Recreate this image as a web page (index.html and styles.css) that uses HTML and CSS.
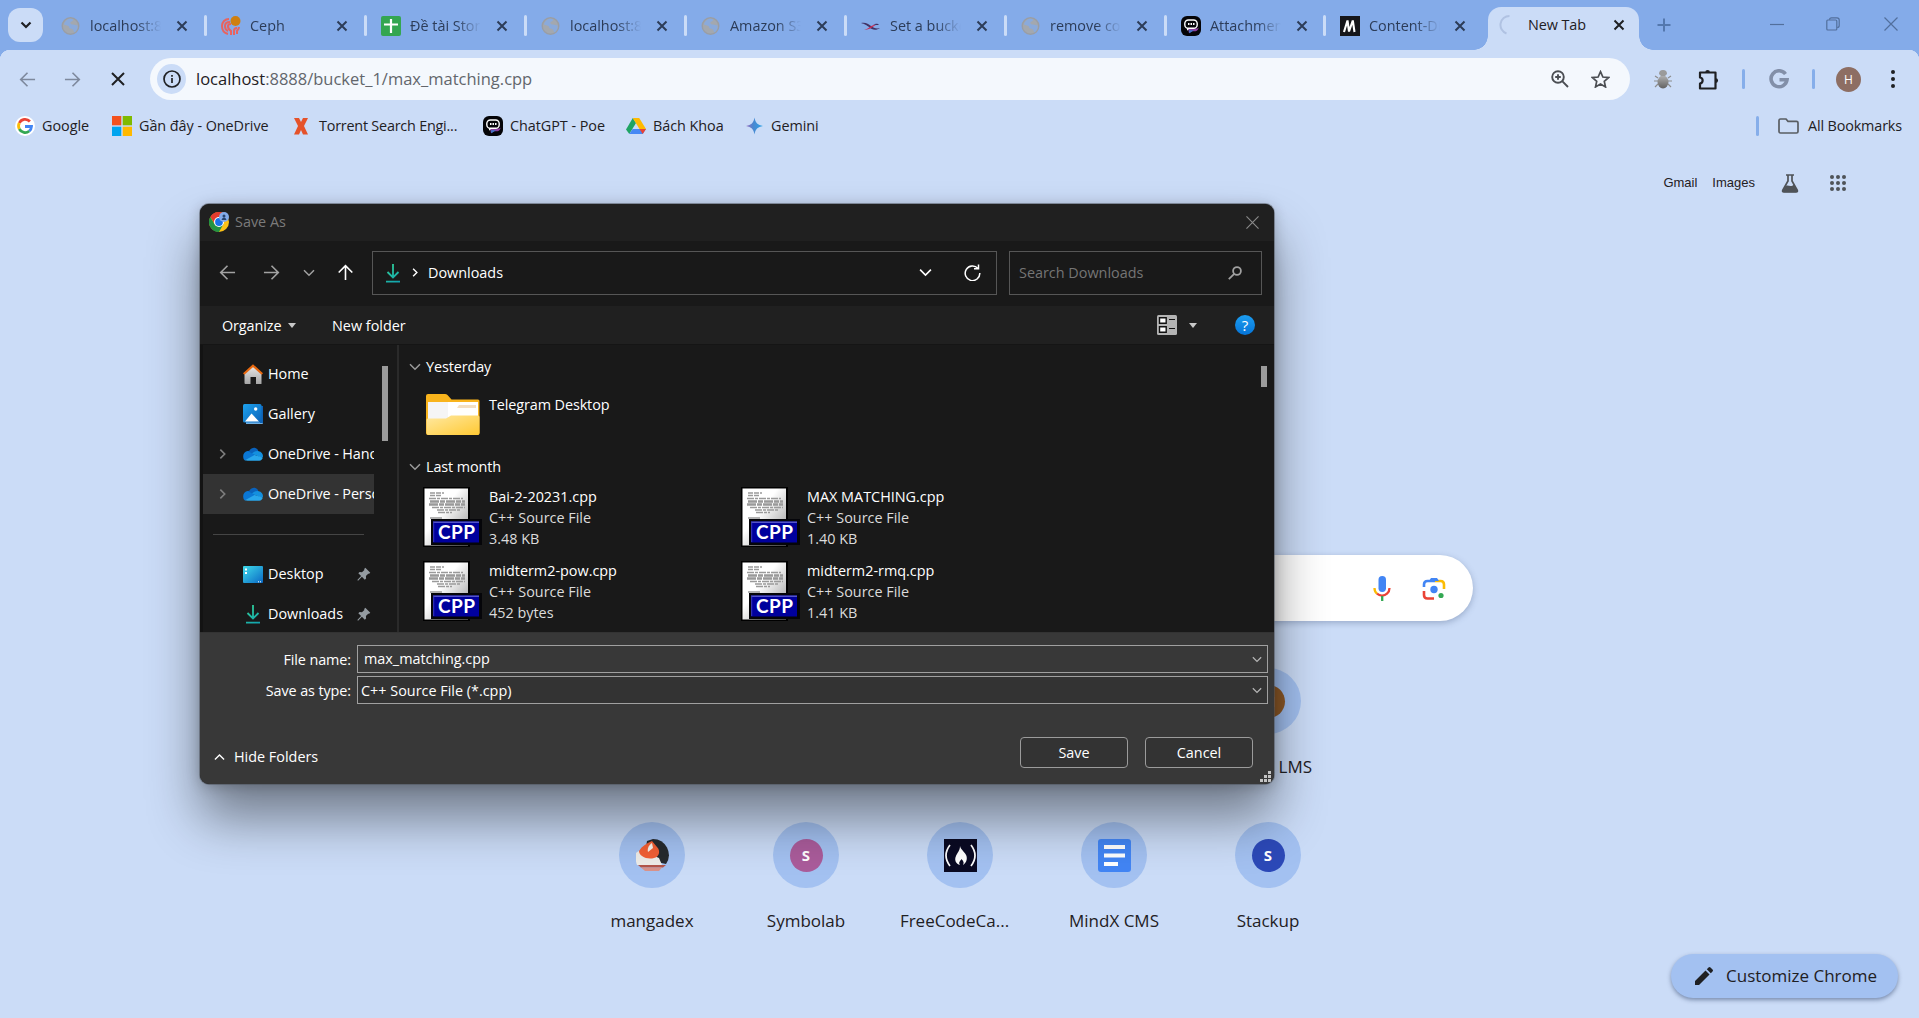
FILE: index.html
```
<!DOCTYPE html>
<html lang="en">
<head>
<meta charset="utf-8">
<title>New Tab</title>
<link rel="stylesheet" href="styles.css">
</head>
<body>
<svg class="defs" aria-hidden="true">
  <defs>
    <linearGradient id="tealflat" gradientUnits="userSpaceOnUse" x1="3" y1="0" x2="17" y2="20"><stop offset="0" stop-color="#35d695"/><stop offset="1" stop-color="#0f9fb0"/></linearGradient>
    <linearGradient id="paper" x1="0" y1="0" x2="1" y2="1"><stop offset=".4" stop-color="#fff"/><stop offset="1" stop-color="#8e8e8e"/></linearGradient>
    <linearGradient id="gold" x1="0" y1="0" x2="1" y2="1"><stop offset="0" stop-color="#ffe9a2"/><stop offset="1" stop-color="#ffc933"/></linearGradient>
    <linearGradient id="gem" x1="0" y1="0" x2="1" y2="0"><stop offset="0" stop-color="#9b6fc0"/><stop offset=".4" stop-color="#4c86cf"/><stop offset="1" stop-color="#2aa4e8"/></linearGradient>
    <linearGradient id="sea" x1="0" y1="0" x2="1" y2="1"><stop offset="0" stop-color="#3fdbea"/><stop offset="1" stop-color="#0a68c4"/></linearGradient>
    <linearGradient id="sky" x1="0" y1="0" x2="1" y2="1"><stop offset="0" stop-color="#1da2ee"/><stop offset="1" stop-color="#0a62b8"/></linearGradient>
    <linearGradient id="wall" x1="0" y1="0" x2="0" y2="1"><stop offset="0" stop-color="#e8e8e8"/><stop offset="1" stop-color="#a5a5a5"/></linearGradient>
    <linearGradient id="bugbody" x1="0" y1="0" x2="0" y2="1"><stop offset="0" stop-color="#b0b0b0"/><stop offset="1" stop-color="#626262"/></linearGradient>
  </defs>
  <symbol id="x" viewBox="0 0 12 12"><path d="M1.500 1.500l9 9M10.500 1.500l-9 9" fill="none" stroke="currentColor" stroke-width="2"/></symbol>
  <symbol id="thinx" viewBox="0 0 14 14"><path d="M.5.5l13 13M13.500.5l-13 13" fill="none" stroke="currentColor" stroke-width="1.200"/></symbol>
  <symbol id="globe" viewBox="0 0 20 20"><circle cx="9.500" cy="10" r="8.300" fill="#a3a8af" stroke="#9a9ea5" stroke-width="1.400"/><path d="M6 4c2-1.500 5-1.500 6-.5 0 1.500-1 2-2.500 2.500-.5 1.500.5 3 2.500 2.500 2 0 2.500 1 4.500 1 .5 3.500-1 5.500-3 7-1-1-1-3-2.500-3.500-2-.5-3-1-3-2.500C6.500 9 4.500 9.500 3 8.500 3.300 6.500 4.500 5 6 4z" fill="#8aaadb"/></symbol>
  <symbol id="poe" viewBox="0 0 20 20"><rect width="20" height="20" rx="6" fill="#050508"/><path d="M7 12.500h9c1.500 0 1.700-1 1.700-2.500-.2 3-.5 4.500-3.200 5.200H11l-3 2z" fill="#8b3fa0"/><path d="M8 14.200h5l-4.600 3z" fill="#3e77c9"/><rect x="3.800" y="4" width="12.400" height="8.300" rx="3.600" fill="none" stroke="#fff" stroke-width="1.400"/><path d="M7 8.100h1.500m1 0H11m1 0h1.500" stroke="#fff" stroke-width="2"/><path d="M6 12v2.800l3-2.500z" fill="#fff"/></symbol>
  <symbol id="down" viewBox="0 0 20 20"><path d="M10 1v13M4.500 9l5.500 5.500L15.500 9M3 18.700h14" fill="none" stroke="url(#tealflat)" stroke-width="1.800"/></symbol>
  <symbol id="cloud" viewBox="0 0 20 14"><path d="M2 7.500C3 4.500 5 4 6.500 3.500 9-.5 14.500.2 15.500 4.500L12 9z" fill="#0a62bb"/><path d="M.3 10.500C-.3 7 1.500 4.300 5 4l9 5.500-12 4C1 13 .4 11.800.3 10.500z" fill="#0b77d4"/><path d="M9 6.500c2-2.300 5-2.800 6.700-2.200 3 .5 4.500 3 4.300 5.500l-2 1z" fill="#1490df"/><path d="M2 13.300L11.500 8l8.300 2.500c-.4 1.900-1.700 3-3.500 3.200H4.600c-1 0-1.900 0-2.600-.4z" fill="#29a7ec"/></symbol>
  <symbol id="pin" viewBox="0 0 16 16"><path d="M9.500.8l5.700 5.700-1.400 1.300-1-.2-2.600 2.700.2 2.700-1.500 1.500-3.300-3.300L1.200 15.600l-.8-.8 4.300-4.400L1.500 7.200 3 5.700l2.700.2 2.700-2.600-.2-1.100z" fill="#949ba1"/></symbol>
  <symbol id="vee" viewBox="0 0 12 8"><path d="M1 1.300l5 5 5-5" fill="none" stroke="currentColor" stroke-width="1.500"/></symbol>
  <symbol id="angle" viewBox="0 0 8 12"><path d="M1.500 1l5 5-5 5" fill="none" stroke="currentColor" stroke-width="1.900"/></symbol>
  <symbol id="arrow" viewBox="0 0 18 18"><path d="M17 9H2M9 1.800L1.800 9 9 16.200" fill="none" stroke="currentColor" stroke-width="1.700"/></symbol>
  <symbol id="tri" viewBox="0 0 8 5"><path d="M0 0h8L4 5z" fill="currentColor"/></symbol>
  <symbol id="cpp" viewBox="0 0 59 60"><path d="M0 0h47v60H0z" fill="#000"/><path d="M1.500 1.500H45v57H1.500z" fill="url(#paper)"/><g stroke="#9a9a9a" stroke-width="1.500"><path d="M7 6h14M7 8.500h12" stroke-dasharray="5 1"/><path d="M6 11.500h34M9 20.500h33M14 23h23M15 25.500h14" stroke-dasharray="7 1 3 1"/><path d="M7 31h12"/></g><g stroke="#999" stroke-width="2.400"><path d="M7 14.500h35M6 17.500h36" stroke-dasharray="9 1 5 1"/></g><path d="M8 32h51v26H8z" fill="#050509"/><path d="M10 34.500h46v21H10z" fill="#00009d"/><path d="M10 35.200h46" stroke="#5454c9" stroke-width="1.500"/><path d="M10.700 35v20" stroke="#3939b5"/></symbol>
</svg>

<header class="tabstrip">
  <button class="tab-search"><svg width="12" height="8" viewBox="0 0 12 8"><path d="M1.500 1.500L6 6l4.500-4.500" fill="none" stroke="#1f2023" stroke-width="2.200"/></svg></button>
  <div class="tab"><svg class="fav"><use href="#globe"/></svg><span>localhost:8888</span><svg class="cls"><use href="#x"/></svg></div>
  <div class="tab"><svg class="fav" viewBox="0 0 20 20"><g fill="none" stroke="#e8635f" stroke-width="2"><path d="M7 18c-4-1-6-4-6-8s3-7 7-7"/><path d="M7 15c-3-1-3-3-3-5 0-3 2-4 5-4M10 19v-4c-2-1-3-3-3-5 0-1 1-2 3-2M13 19v-4c0-2 1-3 3-3M16 18v-3c1-1 2-2 2-4"/></g><circle cx="14.500" cy="5" r="5" fill="#cf7f10"/></svg><span>Ceph</span><svg class="cls"><use href="#x"/></svg></div>
  <div class="tab"><svg class="fav" viewBox="0 0 20 20"><rect width="20" height="20" rx="2" fill="#34a651"/><path d="M10 3v14M3 8.500h14" stroke="#fff" stroke-width="2.200"/></svg><span>Đề tài Storage</span><svg class="cls"><use href="#x"/></svg></div>
  <div class="tab"><svg class="fav"><use href="#globe"/></svg><span>localhost:8888</span><svg class="cls"><use href="#x"/></svg></div>
  <div class="tab"><svg class="fav"><use href="#globe"/></svg><span>Amazon S3 AP</span><svg class="cls"><use href="#x"/></svg></div>
  <div class="tab"><svg class="fav" viewBox="0 0 20 20"><path d="M0 7c5-1 7 1 10 3 3 2 5 3 9 2-4 3-8 2-11-1C5 9 4 8 0 7z" fill="#413366"/><path d="M3 14c5-1 6-5 14-6-5 2-8 6-14 6z" fill="#c72d55"/><path d="M12 8c2 0 5-1 6 1-2 0-4 0-6-1z" fill="#413366"/></svg><span>Set a bucket pol</span><svg class="cls"><use href="#x"/></svg></div>
  <div class="tab"><svg class="fav"><use href="#globe"/></svg><span>remove content</span><svg class="cls"><use href="#x"/></svg></div>
  <div class="tab short"><svg class="fav"><use href="#poe"/></svg><span>Attachments</span><svg class="cls"><use href="#x"/></svg></div>
  <div class="tab last"><svg class="fav" viewBox="0 0 20 20"><rect width="20" height="20" fill="#15161a"/><path d="M4 16L7.500 4.500 9 15.500 12.800 4.500 14.500 16" fill="none" stroke="#fff" stroke-width="2.100" stroke-linejoin="bevel"/></svg><span>Content-Disposition</span><svg class="cls"><use href="#x"/></svg></div>
  <div class="tab active"><svg class="fav" viewBox="0 0 20 20"><path d="M12.500 1A9 9 0 0 0 9.500 18.500" fill="none" stroke="#b0c2e2" stroke-width="2"/></svg><span>New Tab</span><svg class="cls"><use href="#x"/></svg></div>
  <svg class="plus" viewBox="0 0 14 14"><path d="M7 .5v13M.5 7h13" stroke="#5478ae" stroke-width="2"/></svg>
  <div class="winctl">
    <svg width="14" height="14" viewBox="0 0 14 14"><path d="M0 7.500h14" stroke="#526f9c" stroke-width="1.200"/></svg>
    <svg width="14" height="14" viewBox="0 0 14 14" fill="none" stroke="#526f9c" stroke-width="1.200"><rect x=".8" y="3" width="10" height="10" rx="1"/><path d="M3.500 2.800Q3.500.8 5.500.8h5.500Q13.200.8 13.200 3v5.500q0 2-2 2"/></svg>
    <svg width="14" height="14"><use href="#thinx"/></svg>
  </div>
</header>

<div class="toolbar">
  <svg class="nav dim" width="17" height="17"><use href="#arrow"/></svg>
  <svg class="nav dim flip" width="17" height="17"><use href="#arrow"/></svg>
  <svg class="nav" width="14" height="14" viewBox="0 0 14 14"><path d="M1 1l12 12M13 1L1 13" stroke="#1f2023" stroke-width="2"/></svg>
  <div class="omnibox">
    <span class="info"><svg width="18" height="18" viewBox="0 0 18 18" fill="none" stroke="#202124" stroke-width="1.700"><circle cx="9" cy="9" r="8"/><path d="M9 8v5M9 5v1.700"/></svg></span>
    <span class="url"><b>localhost</b>:8888/bucket_1/max_matching.cpp</span>
    <svg width="18" height="18" viewBox="0 0 18 18" fill="none" stroke="#4b4e53" stroke-width="1.900"><circle cx="7" cy="7" r="5.800"/><path d="M11.200 11.200L17 17M7 4.200v5.600M4.200 7h5.600"/></svg>
    <svg width="19" height="18" viewBox="0 0 20 19" fill="none" stroke="#4b4e53" stroke-width="1.800"><path d="M10 1.800l2.500 5.600 6 .6-4.500 4 1.300 5.900L10 14.800l-5.300 3.100L6 12 1.500 8l6-.6z"/></svg>
  </div>
  <div class="ext">
    <svg width="18" height="20" viewBox="0 0 18 20"><g stroke="#8d8d8d" stroke-width="1.200" fill="none"><path d="M4 9L1 7M4 12H0M4 15l-3 3M14 9l3-2M14 12h4M14 15l3 3"/></g><ellipse cx="9" cy="13" rx="5.500" ry="6.500" fill="url(#bugbody)"/><path d="M5 5a4 4 0 0 1 8 0l-2 2H7z" fill="#9a9a9a"/></svg>
    <svg width="21" height="21" viewBox="0 0 21 21"><path d="M2 3.500h15.500V19.500H2v-5c3.500-.5 3.500-5.500 0-6z" fill="none" stroke="#1f2023" stroke-width="2.200" stroke-linejoin="round"/><path d="M7.300 3.300a2.300 2.300 0 0 1 4.600 0zM17.700 9.200a2.300 2.300 0 0 1 0 4.800z" fill="#1f2023"/></svg>
    <i class="bar"></i>
    <svg width="20" height="20" viewBox="0 0 20 20"><path d="M16.500 5A8 8 0 1 0 18 10.800H10.500" fill="none" stroke="#828fa8" stroke-width="3.600"/></svg>
    <i class="bar"></i>
    <span class="avatar">H</span>
    <svg width="4" height="18" viewBox="0 0 4 18" fill="#1f2023"><circle cx="2" cy="2" r="2"/><circle cx="2" cy="9" r="2"/><circle cx="2" cy="16" r="2"/></svg>
  </div>
</div>

<nav class="bookmarks">
  <a><svg viewBox="0 0 20 20"><circle cx="10" cy="10" r="10" fill="#fff"/><g fill="none" stroke-width="2.800"><path d="M14.900 5.500A6.500 6.500 0 0 0 4.300 7" stroke="#ea4335"/><path d="M4.300 7a6.500 6.500 0 0 0 0 6" stroke="#fbbc05"/><path d="M4.300 13a6.500 6.500 0 0 0 10 2" stroke="#34a853"/><path d="M14.300 15a6.500 6.500 0 0 0 2.200-4.500H10" stroke="#4285f4"/></g></svg>Google</a>
  <a><svg viewBox="0 0 20 20"><path fill="#f4511e" d="M0 0h9.300v9.300H0z"/><path fill="#7fba00" d="M10.700 0H20v9.300h-9.300z"/><path fill="#00a4ef" d="M0 10.700h9.300V20H0z"/><path fill="#ffb900" d="M10.700 10.700H20V20h-9.300z"/></svg>Gần đây - OneDrive</a>
  <a class="tight"><svg class="slim" viewBox="0 0 14 18"><path d="M0 1h5l2 4 2-4h5l-4 8 4 8.500H9L7 13l-2 4.500H0L4 9z" fill="#e5522a"/></svg>Torrent Search Engi...</a>
  <a><svg><use href="#poe"/></svg>ChatGPT - Poe</a>
  <a><svg viewBox="0 0 20 20"><path d="M6.800 2L0 13.500 3.300 18l6.700-11z" fill="#1fa463"/><path d="M6.800 2h6.400L20 13h-6.500z" fill="#ffba00"/><path d="M3.300 18L6.600 13H20l-3.300 5z" fill="#4688f4"/><path d="M13.500 13H20l-3.300 5z" fill="#ea4335"/></svg>Bách Khoa</a>
  <a><svg class="star" viewBox="0 0 16 16"><path d="M8 0c.8 5 3 7.200 8 8-5 .8-7.200 3-8 8-.8-5-3-7.200-8-8 5-.8 7.200-3 8-8z" fill="url(#gem)"/></svg>Gemini</a>
  <span class="all"><i class="bar"></i><svg width="21" height="16" viewBox="0 0 21 16"><path d="M1 2.500Q1 1 2.500 1H8l2 2.300h8.500Q20 3.300 20 4.800v8.700q0 1.500-1.500 1.500h-16Q1 15 1 13.500z" fill="none" stroke="#5a5e63" stroke-width="1.700"/></svg>All Bookmarks</span>
</nav>

<main class="ntp">
  <div class="links">
    <span>Gmail</span><span>Images</span>
    <svg width="18" height="19" viewBox="0 0 18 19"><path d="M5 1h8M7 1v6L1.800 16.200Q1 18 3 18h12q2 0 1.200-1.800L11 7V1" fill="none" stroke="#4f5358" stroke-width="1.700"/><path d="M4.500 12c3-1.500 5 2 8.500-1.500L16.500 17l-1 1.200H2.500L1.500 17z" fill="#4f5358"/></svg>
    <svg width="16" height="16" viewBox="0 0 16 16" fill="#4f5358"><circle cx="2" cy="2" r="2"/><circle cx="8" cy="2" r="2"/><circle cx="14" cy="2" r="2"/><circle cx="2" cy="8" r="2"/><circle cx="8" cy="8" r="2"/><circle cx="14" cy="8" r="2"/><circle cx="2" cy="14" r="2"/><circle cx="8" cy="14" r="2"/><circle cx="14" cy="14" r="2"/></svg>
  </div>
  <div class="realbox">
    <svg width="18" height="25" viewBox="0 0 18 25"><rect x="5.500" y="0" width="7.500" height="16" rx="3.700" fill="#4285f4"/><g fill="none" stroke-width="2.300"><path d="M1.500 12c0 2.500 1 4.500 2.500 5.700" stroke="#fbbc04"/><path d="M4 17.700c3 2.600 7.500 2.300 10 0 1.500-1.300 2.500-3.300 2.500-5.700" stroke="#ea4335"/><path d="M9.200 20v5" stroke="#34a853"/></g></svg>
    <svg width="24" height="23" viewBox="0 0 24 23"><g fill="none" stroke-width="2.600"><path d="M2 10V7.500Q2 4 5.500 4H13" stroke="#4285f4"/><path d="M13 4h5.500Q22 4 22 7.500V12" stroke="#fbbc04"/><path d="M2 14v4q0 3.500 3.500 3.500H12" stroke="#ea4335"/></g><path d="M7 4l2-3h6l2 3z" fill="#4285f4"/><circle cx="12" cy="12.500" r="3.700" fill="#4285f4"/><circle cx="19" cy="18.500" r="2.600" fill="#34a853"/></svg>
  </div>
  <div class="tiles">
    <div class="tile fifth"><span class="disc"><i class="letter brown">M</i></span>MindX LMS</div>
    <div class="tile"><span class="disc"><svg viewBox="0 0 33 33"><path d="M17 0a16 16 0 0 1 13 25l-9-2L10 8 11 2z" fill="#262a2e"/><path d="M0 14c4-3 7-3 9-1l14 6 3 7H1C-.5 22-.5 18 0 14z" fill="#eeece8"/><path d="M3 12c3-5 8-8 13-10l5 6c4 4 2 10-3 11-7 2-15-2-15-7z" fill="#f25f34"/><path d="M16 4l1 5-5 4c-1-4 1-7 4-9z" fill="#f7f2ec"/><path d="M2 26h28l-3 2.500H5z" fill="#b4564a"/><path d="M5 28.500h21L23 32H9z" fill="#d9938b"/></svg></span>mangadex</div>
    <div class="tile"><span class="disc"><i class="letter pink">S</i></span>Symbolab</div>
    <div class="tile"><span class="disc"><svg viewBox="0 0 33 33"><path d="M0 0h33v33H0z" fill="#0a0a23"/><g fill="none" stroke="#fff" stroke-width="1.700"><path d="M6 6q-8 10.500 0 21M27 6q8 10.500 0 21"/></g><path d="M16 7c1 4 5 6 6.500 10 1 4-.5 7-3.500 9 1.500-3 0-4-1.500-6-1 2-3.500 3-1.500 6-4-1-6-5-4-9 1-3 4-5 4-10z" fill="#fff"/></svg></span><em>FreeCodeCa...</em></div>
    <div class="tile"><span class="disc"><svg viewBox="0 0 33 33"><rect width="33" height="33" rx="3" fill="#4285f4"/><path d="M6 6h21v4H6zM6 14.500h21v4H6zM6 23h14v4H6z" fill="#fff"/></svg></span>MindX CMS</div>
    <div class="tile"><span class="disc"><i class="letter blue">S</i></span>Stackup</div>
  </div>
  <button class="customize"><svg width="18" height="18" viewBox="0 0 18 18"><path d="M0 14L10.500 3.500l4 4L4 18H0zM11.800 2.300L13.500.6q1-1 2 0l2 2q1 1 0 2l-1.700 1.700z" fill="#1f2023"/></svg>Customize Chrome</button>
</main>

<section class="dialog">
  <div class="titlebar">
    <svg width="20" height="20" viewBox="0 0 20 20"><circle cx="10" cy="10" r="10" fill="#fbc116"/><path d="M1.300 5A10 10 0 0 1 18.700 5H10L6 12z" fill="#e33b2e"/><path d="M1.300 5A10 10 0 0 0 10 20l4.500-8H5.500z" fill="#229342"/><circle cx="10" cy="10" r="5" fill="#fff"/><circle cx="10" cy="10" r="3.900" fill="#1a73e8"/><circle cx="15" cy="5" r="5" fill="#84abe9"/><circle cx="15" cy="4" r="1.500" fill="#28446f"/><path d="M12.500 8q.5-2.500 2.500-2.500T17.500 8z" fill="#28446f"/></svg>
    <span>Save As</span>
    <svg class="close" width="13" height="13"><use href="#thinx"/></svg>
  </div>
  <div class="navrow">
    <svg class="g" width="17" height="17"><use href="#arrow"/></svg>
    <svg class="g flip" width="17" height="17"><use href="#arrow"/></svg>
    <svg class="g" width="12" height="8"><use href="#vee"/></svg>
    <svg class="up" width="17" height="17"><use href="#arrow"/></svg>
    <div class="address"><svg width="20" height="20"><use href="#down"/></svg><svg width="6" height="9"><use href="#angle"/></svg><span>Downloads</span><svg width="13" height="9"><use href="#vee"/></svg><svg width="17" height="17" viewBox="0 0 17 17" fill="none" stroke="#fff" stroke-width="1.500"><path d="M14 4.500A7.300 7.300 0 1 0 15.800 9M14.500.5v4.300H10"/></svg></div>
    <div class="search"><span>Search Downloads</span><svg width="14" height="14" viewBox="0 0 14 14" fill="none" stroke="#a0a0a0" stroke-width="1.800"><circle cx="9" cy="5" r="3.900"/><path d="M6.200 7.800L.8 13.200"/></svg></div>
  </div>
  <div class="cmdbar">
    <span class="org">Organize<svg width="8" height="5"><use href="#tri"/></svg></span><span>New folder</span>
    <svg class="view" width="20" height="20" viewBox="0 0 20 20"><rect width="20" height="20" rx="1.500" fill="#b4b4b4"/><path d="M2.500 2.700h6.700v5.600H2.500zM2.500 11.700h6.700v5.600H2.500z" fill="#fff" stroke="#111" stroke-width="1.400"/><path d="M12 4.500h6M12 13.500h6" stroke="#111" stroke-width="1.200"/></svg>
    <svg class="t2" width="8" height="5"><use href="#tri"/></svg>
    <span class="help">?</span>
  </div>
  <div class="body">
    <aside>
      <ul>
        <li><svg width="20" height="20" viewBox="0 0 20 20"><path d="M1.500 9L10 2l8.500 7v10.500q0 .5-.5.5h-5v-7H7.500v7h-5q-1 0-1-1z" fill="url(#wall)"/><path d="M.7 10L10 1.700 19.300 10" fill="none" stroke="#e8680f" stroke-width="2.200"/></svg>Home</li>
        <li><svg width="20" height="20" viewBox="0 0 20 20"><path d="M3 2h17v17q0 1-1 1H3z" fill="#6fb0e4"/><path d="M17 2h3v17h-3z" fill="#0f62b4"/><rect width="18.500" height="18.500" rx="1.500" fill="url(#sky)"/><path d="M2 17.500l6.500-8 7.500 8z" fill="#fff"/><circle cx="12.700" cy="5" r="1.700" fill="#fff"/></svg>Gallery</li>
        <li class="sub"><svg class="exp" width="7" height="12"><use href="#angle"/></svg><svg width="20" height="14"><use href="#cloud"/></svg>OneDrive - Hanoi</li>
        <li class="sub sel"><svg class="exp" width="7" height="12"><use href="#angle"/></svg><svg width="20" height="14"><use href="#cloud"/></svg>OneDrive - Personal</li>
        <li class="rule"></li>
        <li><svg width="20" height="17" viewBox="0 0 20 17"><rect width="20" height="17" rx="1" fill="url(#sea)"/><path d="M2 2.500h2v2H2zM2 6h2v2H2z" fill="#fff"/><path d="M15 15.800h1m1 0h1" stroke="#fff"/></svg>Desktop<svg class="pin"><use href="#pin"/></svg></li>
        <li><svg width="20" height="20"><use href="#down"/></svg>Downloads<svg class="pin"><use href="#pin"/></svg></li>
      </ul>
      <i class="thumb"></i>
    </aside>
    <div class="files">
      <h4><svg width="12" height="8"><use href="#vee"/></svg>Yesterday</h4>
      <div class="folder"><svg width="54" height="43" viewBox="0 0 54 43"><path d="M0 3Q0 1 2 1h17q1.500 0 2.500 1l4 4.500H52q1.500 0 1.500 1.500v32q0 2-2 2H2q-2 0-2-2z" fill="#f9b41c"/><path d="M2 9h50v22H2z" fill="#f5f5f5"/><path d="M22 9h30v20H22z" fill="#fff"/><path d="M33 12h17v3H31z" fill="#eed1aa" opacity=".7"/><path d="M.5 27q0-1.500 1.500-1.500h18l5-3h27q1.500 0 1.500 1.500v16q0 2-2 2H2.500q-2 0-2-2z" fill="url(#gold)"/></svg><span>Telegram Desktop</span></div>
      <h4><svg width="12" height="8"><use href="#vee"/></svg>Last month</h4>
      <div class="grid">
        <div class="file"><span class="ico"><svg><use href="#cpp"/></svg><b>CPP</b></span><p>Bai-2-20231.cpp<small>C++ Source File</small><small>3.48 KB</small></p></div>
        <div class="file"><span class="ico"><svg><use href="#cpp"/></svg><b>CPP</b></span><p>MAX MATCHING.cpp<small>C++ Source File</small><small>1.40 KB</small></p></div>
        <div class="file"><span class="ico"><svg><use href="#cpp"/></svg><b>CPP</b></span><p>midterm2-pow.cpp<small>C++ Source File</small><small>452 bytes</small></p></div>
        <div class="file"><span class="ico"><svg><use href="#cpp"/></svg><b>CPP</b></span><p>midterm2-rmq.cpp<small>C++ Source File</small><small>1.41 KB</small></p></div>
      </div>
    </div>
    <i class="thumb short-thumb"></i>
  </div>
  <footer>
    <label>File name:</label><div class="field name">max_matching.cpp<svg width="10" height="7"><use href="#vee"/></svg></div>
    <label>Save as type:</label><div class="field">C++ Source File (*.cpp)<svg width="10" height="7"><use href="#vee"/></svg></div>
    <div class="actions"><span class="hide"><svg width="11" height="8"><use href="#vee"/></svg>Hide Folders</span><button>Save</button><button>Cancel</button></div>
    <svg class="grip" width="11" height="11" viewBox="0 0 11 11" fill="#c4c4c4"><path d="M8 0h3v3H8zM4 4h3v3H4zM8 4h3v3H8zM0 8h3v3H0zM4 8h3v3H4zM8 8h3v3H8z"/></svg>
  </footer>
</section>
</body>
</html>
```
FILE: styles.css
```
* { box-sizing: border-box; }
body {
  margin: 0; height: 1018px; overflow: hidden; position: relative;
  display: flex; flex-direction: column;
  background: #cbdcf7; color: #1f2023;
  font: 14.4px/20px "Open Sans", "Noto Sans", sans-serif;
}
svg { display: block; flex: none; }
button { font: inherit; color: inherit; border: 0; padding: 0; }
em { font-style: normal; }
.defs { position: absolute; width: 0; height: 0; }
.flip { transform: scaleX(-1); }
.bar { width: 3px; height: 20px; border-radius: 2px; background: #86aeea; }

/* tab strip */
.tabstrip { height: 50px; flex: none; display: flex; background: #84abe9; padding-left: 8px; }
.tab-search { width: 35px; height: 34px; margin: 8px 4px 0 0; border-radius: 12px; background: #cbdcf7; display: flex; align-items: center; justify-content: center; }
.tab { width: 160px; height: 50px; display: flex; align-items: center; padding: 1px 0 0 14px; color: #2c3c58; }
.tab::after { content: ""; width: 3px; height: 21px; margin-left: auto; background: #cbdcf7; border-radius: 2px; }
.tab .fav { width: 20px; height: 20px; }
.tab span { width: 71px; margin-left: 9px; overflow: hidden; white-space: nowrap; line-height: 24px; mask-image: linear-gradient(90deg, #000 65%, transparent); -webkit-mask-image: linear-gradient(90deg, #000 65%, transparent); }
.tab .cls { width: 12px; height: 12px; margin-left: 15px; }
.tab.short { width: 159px; }
.tab.last::after, .tab.active::after { display: none; }
.tab.last .cls { margin-left: 14px; }
.tab.active { width: 151px; height: 43px; margin: 7px 0 0 2px; padding: 0 0 7px 9px; background: #cbdcf7; border-radius: 13px 13px 0 0; color: #1f2023; position: relative; }
.tab.active span { margin-left: 11px; mask: none; -webkit-mask: none; }
.tab.active .cls { margin-left: 14px; }
.tab.active::before { content: ""; position: absolute; left: -14px; right: -14px; bottom: 0; height: 14px;
  background: radial-gradient(circle at 0 0, transparent 13.500px, #cbdcf7 14px) left / 14px 14px no-repeat, radial-gradient(circle at 100% 0, transparent 13.500px, #cbdcf7 14px) right / 14px 14px no-repeat; }
.tab.active span { letter-spacing: -.1px; }
.plus { width: 14px; height: 14px; margin: 18px 0 0 18px; }
.winctl { margin: 17px 21px 0 auto; display: flex; gap: 43px; }
.winctl svg { color: #526f9c; }
.winctl svg:nth-child(1) { margin-right: -1px; }
.winctl svg:nth-child(2) { margin-right: 1px; }

/* toolbar */
.toolbar { height: 58px; flex: none; display: flex; align-items: center; padding-left: 19px; background: radial-gradient(circle at 100% 100%, transparent 10px, #84abe9 10.500px) 0 0 / 10px 10px no-repeat, radial-gradient(circle at 0 100%, transparent 10px, #84abe9 10.500px) 100% 0 / 10px 10px no-repeat; }
.nav { margin-right: 28px; }
.nav:nth-child(2) { margin-right: 30px; }
.nav:nth-child(3) { margin-right: 25px; }
.dim { color: #7e899d; }
.omnibox { width: 1480px; height: 42px; border-radius: 21px; background: #f4f8fd; display: flex; align-items: center; padding: 0 20px 0 7px; }
.info { width: 29px; height: 30px; border-radius: 50%; background: #cbdcf7; display: flex; align-items: center; justify-content: center; margin-right: 10px; }
.url { flex: 1; font-size: 16.500px; line-height: 24px; color: #62666c; }
.url b { font-weight: 400; color: #1f2023; }
.omnibox > svg + svg { margin-left: 22px; }
.ext { flex: 1; display: grid; grid-template-columns: 40px 50px 20px 52px 17px 53px 36px; padding-left: 13px; align-items: center; justify-items: center; }
.avatar { width: 25px; height: 25px; border-radius: 50%; background: #8d6e63; color: #fff; font-size: 12px; text-align: center; line-height: 25px; }

/* bookmarks */
.bookmarks { height: 36px; flex: none; display: grid; grid-template-columns: 97px 182px 189px 143px 119px 100px 1fr; padding-left: 15px; align-items: center; }
.bookmarks a { display: flex; align-items: center; white-space: nowrap; letter-spacing: -.05px; }
.bookmarks a svg { width: 20px; height: 20px; margin-right: 7px; }
.bookmarks a svg.slim { width: 14px; height: 20px; margin-right: 11px; }
.bookmarks a svg.star { width: 17px; height: 18px; margin: 0 8px 0 1px; }
.bookmarks .tight { letter-spacing: -.22px; }
.all { display: flex; align-items: center; justify-content: flex-end; padding-right: 17px; letter-spacing: -.15px; }
.all svg { margin: 0 9px 0 19px; }

/* new tab page */
.ntp { flex: 1; display: flex; flex-direction: column; align-items: center; position: relative; }
.links { align-self: flex-end; display: flex; align-items: center; height: 26px; margin: 26px 73px 0 0; font: 13px/20px "Liberation Sans", Arial, sans-serif; }
.links span { margin-right: 15px; }
.links svg { margin-left: 11px; }
.links svg + svg { margin-left: 31px; }
.realbox { width: 1026px; height: 66px; margin-top: 359px; border-radius: 33px; background: #fff; display: flex; align-items: center; justify-content: flex-end; gap: 31px; padding-right: 27px; box-shadow: 0 2px 6px rgba(60, 80, 120, .35); }
.tiles { display: grid; grid-template-columns: repeat(5, 154px); grid-auto-rows: 154px; margin: 47px 0 0 1px; font-size: 17px; line-height: 24px; }
.tile { display: flex; flex-direction: column; align-items: center; gap: 21px; }
.tile em { margin-right: 11px; }
.fifth { grid-column: 5; }
.disc { width: 66px; height: 66px; border-radius: 50%; background: #a3c1f1; display: flex; align-items: center; justify-content: center; }
.disc svg { width: 33px; height: 33px; }
.letter { width: 33px; height: 33px; border-radius: 50%; color: #fff; font: 700 15px/33px "Open Sans", sans-serif; text-align: center; }
.brown { background: #8f5a28; }
.pink { background: #aa5c9b; }
.blue { background: #2c49b8; }
.customize { position: absolute; right: 21px; bottom: 20px; width: 227px; height: 44px; border-radius: 22px; background: #a3c1f1; font-size: 17px; display: flex; align-items: center; padding-left: 24px; gap: 13px; white-space: nowrap; box-shadow: 0 2px 4px rgba(40, 60, 100, .5); }

/* save dialog */
.dialog { position: absolute; left: 200px; top: 204px; width: 1074px; height: 580px; border-radius: 9px; overflow: hidden; background: #191919; color: #fff; display: flex; flex-direction: column;
  box-shadow: 0 0 0 1px rgba(80, 85, 95, .55), 0 2px 14px rgba(0, 0, 0, .22), 0 34px 52px rgba(0, 0, 0, .44); }
.titlebar { height: 37px; background: #202020; display: flex; align-items: center; padding: 0 15px 1px 9px; color: #7b7b7b; }
.titlebar span { flex: 1; margin-left: 6px; }
.close { color: #8b8b8b; }
.navrow { height: 65px; display: flex; align-items: center; padding: 0 12px 2px 19px; }
.g { color: #a2a2a2; }
.navrow > svg { margin-right: 27px; }
.navrow > svg:nth-child(2) { margin-right: 23px; }
.navrow > svg:nth-child(3) { margin-right: 22px; }
.navrow > .up { transform: rotate(90deg); margin-right: 18px; }
.address, .search { height: 44px; border: 1px solid #565656; display: flex; align-items: center; }
.address { width: 625px; margin-right: 12px; padding: 0 15px 0 10px; }
.address svg:nth-child(2) { margin: 0 10px 0 9px; }
.address span { flex: 1; }
.address svg:nth-child(4) { margin-right: 32px; }
.search { flex: 1; padding: 1px 19px 0 9px; color: #757575; }
.search span { flex: 1; }
.cmdbar { height: 38px; background: #202020; display: flex; align-items: center; padding: 2px 19px 0 22px; }
.org { display: flex; align-items: center; gap: 7px; width: 110px; letter-spacing: -.1px; }
.org svg, .t2 { color: #c8c8c8; }
.org svg { margin-bottom: 2px; }
.view { margin-left: auto; margin-top: -2px; }
.t2 { margin: -2px 38px 0 12px; }
.help { width: 20px; height: 20px; border-radius: 50%; background: linear-gradient(#1c9df0, #0574d8); text-align: center; font-size: 15px; line-height: 20px; margin-top: -3px; }
.body { height: 288px; display: flex; border-top: 1px solid #151515; }
aside { width: 199px; display: flex; padding: 9px 0 0 3px; border-right: 2px solid #2a2a2a; box-shadow: inset 3px 0 #131313; }
ul { list-style: none; margin: 0; padding: 0; width: 171px; overflow: hidden; }
li { height: 40px; display: flex; align-items: center; padding-left: 40px; white-space: nowrap; }
li > svg { margin-right: 5px; }
li.sub { padding-left: 16px; letter-spacing: -.1px; }
li .exp { color: #7d7d7d; margin-right: 17px; }
li.sel { background: #333; }
li.rule::before { content: ""; height: 1px; background: #454545; width: 151px; margin-left: -30px; }
li .pin { width: 14px; height: 14px; margin: 0 3px 0 auto; }
.thumb { width: 6px; height: 75px; background: #9b9b9b; margin: 12px 0 0 8px; }
.thumb.short-thumb { height: 21px; margin: 21px 7px 0 auto; }
.files { padding: 12px 0 0 10px; }
h4 { margin: 0; font-weight: 400; font-size: inherit; line-height: 20px; display: flex; align-items: center; gap: 5px; letter-spacing: -.1px; }
h4 svg { color: #9b9b9b; }
.folder { display: flex; height: 80px; padding: 16px 0 0 17px; gap: 9px; }
.folder span { padding-top: 2px; letter-spacing: -.1px; }
.grid { display: grid; grid-template-columns: 318px 318px; grid-auto-rows: 74px; padding: 10px 0 0 14px; }
.file { display: flex; gap: 7px; }
.ico { position: relative; width: 59px; height: 60px; }
.ico svg { width: 59px; height: 60px; }
.ico b { position: absolute; left: 15px; top: 34px; font: 700 19px/22px Lato, "Open Sans", sans-serif; letter-spacing: .4px; }
.file p { margin: -1px 0 0; line-height: 21px; }
small { display: block; font-size: inherit; color: #dcdcdc; }
footer { flex: 1; background: #383838; border-top: 1px solid #333; padding: 12px 6px 0 0; display: grid; grid-template-columns: 151px 911px; grid-template-rows: 28px 28px 1fr; column-gap: 6px; row-gap: 3px; position: relative; }
label { text-align: right; line-height: 29px; letter-spacing: -.1px; }
.field { border: 1px solid #a0a0a0; background: #333; padding: 1px 5px 0 3px; display: flex; align-items: center; justify-content: space-between; }
.field.name { background: #383838; padding: 0 5px 0 6px; }
.field svg { color: #b5b5b5; }
.actions { grid-column: 1 / 3; display: flex; gap: 17px; padding: 30px 15px 0 14px; }
.actions button { width: 108px; height: 31px; border: 1px solid #9b9b9b; border-radius: 4px; background: #333; color: #fff; }
.hide { flex: 1; display: flex; align-items: center; gap: 9px; height: 40px; }
.hide svg { transform: scaleY(-1); }
.grip { position: absolute; right: 3px; bottom: 2px; }
```
